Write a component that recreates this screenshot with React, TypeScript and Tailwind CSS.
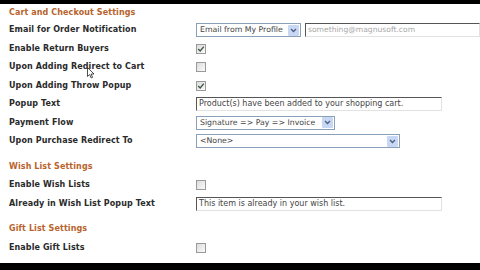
import React from 'react'

const font = { fontFamily: '"DejaVu Sans", Verdana, sans-serif' }

function Checkbox({ checked }: { checked?: boolean }) {
  return (
    <div className="flex h-[10px] w-[10px] items-center justify-center border border-[#9a9a9a] bg-gradient-to-br from-[#dcdcdc] to-[#fafafa]">
      {checked && (
        <svg width="8" height="8" viewBox="0 0 8 8">
          <path d="M1.2 4 L3.2 6 L6.8 1.6" fill="none" stroke="#3f5a46" strokeWidth="1.4" />
        </svg>
      )}
    </div>
  )
}

function Select({ value, width }: { value: string; width: string }) {
  return (
    <div className={`flex h-[14px] items-center justify-between border border-[#8aa0b8] bg-white pl-[3px] pr-[1px] ${width}`}>
      <span className="whitespace-nowrap text-[7.8px] leading-none text-[#444]">{value}</span>
      <span className="flex h-[11px] w-[11px] shrink-0 items-center justify-center rounded-[1px] bg-[#c8d8f4]">
        <svg width="7" height="5" viewBox="0 0 7 5">
          <path d="M1 1 L3.5 3.5 L6 1" fill="none" stroke="#4d6185" strokeWidth="1.4" />
        </svg>
      </span>
    </div>
  )
}

function TextInput({ value, width, muted }: { value: string; width: string; muted?: boolean }) {
  return (
    <div className={`flex h-[14px] items-center overflow-hidden border border-t-[#555] border-l-[#555] border-r-[#e2e2e2] border-b-[#e2e2e2] bg-white pl-[2px] ${width}`}>
      <span className={`whitespace-nowrap leading-none ${muted ? 'text-[7.6px] text-[#a8a8a8]' : 'text-[8px] text-[#444]'}`}>{value}</span>
    </div>
  )
}

function Row({ label, children }: { label: string; children?: React.ReactNode }) {
  return (
    <div className="flex h-[18.5px] items-center">
      <div className="w-[196px] whitespace-nowrap pl-[9px] text-[8px] font-bold tracking-[0.1px] text-[#2a2a2a]">{label}</div>
      <div className="flex items-center gap-[4px]">{children}</div>
    </div>
  )
}

function Header({ title, first }: { title: string; first?: boolean }) {
  return (
    <div className={`flex items-center pl-[9px] text-[8px] font-bold tracking-[0.1px] text-[#b8632d] ${first ? 'h-[15.5px]' : 'mt-[7px] h-[18.5px]'}`}>
      {title}
    </div>
  )
}

export default function App() {
  return (
    <div className="relative flex h-[270px] w-[480px] flex-col overflow-hidden bg-white" style={font}>
      <div className="h-[4px] bg-black" />
      <div className="flex-1 pt-[1.5px]">
        <Header title="Cart and Checkout Settings" first />
        <Row label="Email for Order Notification">
          <Select value="Email from My Profile" width="w-[105px]" />
          <TextInput value="something@magnusoft.com" width="w-[175px]" muted />
        </Row>
        <Row label="Enable Return Buyers">
          <Checkbox checked />
        </Row>
        <Row label="Upon Adding Redirect to Cart">
          <Checkbox />
        </Row>
        <Row label="Upon Adding Throw Popup">
          <Checkbox checked />
        </Row>
        <Row label="Popup Text">
          <TextInput value="Product(s) have been added to your shopping cart." width="w-[246px]" />
        </Row>
        <Row label="Payment Flow">
          <Select value="Signature => Pay => Invoice" width="w-[139px]" />
        </Row>
        <Row label="Upon Purchase Redirect To">
          <Select value="<None>" width="w-[204px]" />
        </Row>

        <Header title="Wish List Settings" />
        <Row label="Enable Wish Lists">
          <Checkbox />
        </Row>
        <Row label="Already in Wish List Popup Text">
          <TextInput value="This item is already in your wish list." width="w-[246px]" />
        </Row>

        <Header title="Gift List Settings" />
        <Row label="Enable Gift Lists">
          <Checkbox />
        </Row>
      </div>
      <div className="h-[7px] bg-black" />

      <svg className="absolute left-[87px] top-[67px]" width="8" height="12" viewBox="0 0 8 12">
        <path d="M0.5 0.5 L0.5 9.5 L2.7 7.5 L4.2 11 L5.6 10.4 L4.1 7 L7 7 Z" fill="white" stroke="#222" strokeWidth="0.8" />
      </svg>
    </div>
  )
}
